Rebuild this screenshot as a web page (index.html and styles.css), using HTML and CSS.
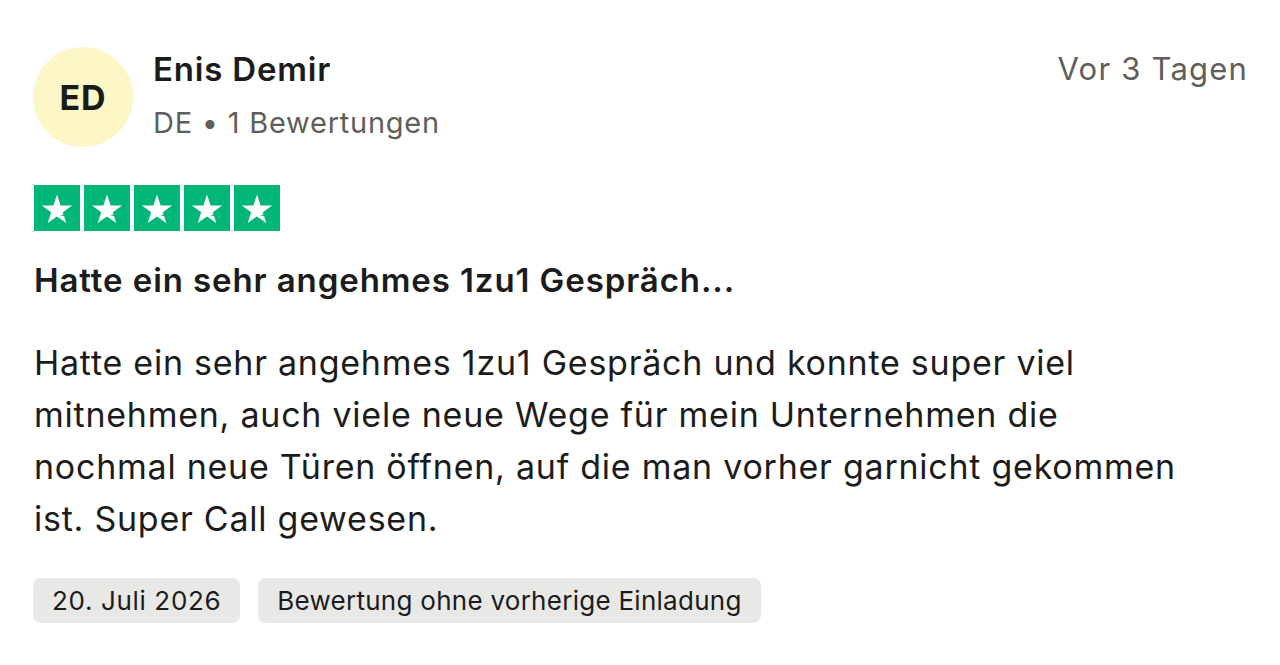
FILE: index.html
```html
<!DOCTYPE html>
<html lang="de">
<head>
<meta charset="utf-8">
<title>Bewertung</title>
<link rel="stylesheet" href="styles.css">
</head>
<body>
<article class="card">
  <header class="head">
    <div class="avatar">ED</div>
    <div class="who">
      <div class="name">Enis Demir</div>
      <div class="meta">DE • 1 Bewertungen</div>
    </div>
    <div class="when">Vor 3 Tagen</div>
  </header>
  <div class="stars">
    <span class="star"><svg viewBox="0 0 46 46"><path d="M23 9.5l3.6 10.9h11.5l-9.3 6.8 3.5 10.9-9.3-6.7-9.3 6.7 3.5-10.9-9.3-6.8h11.5z" fill="#fff"/><path d="M26.2 30.4l3.6-1.1 0.5 1.6z" fill="#00b67a"/></svg></span>
    <span class="star"><svg viewBox="0 0 46 46"><path d="M23 9.5l3.6 10.9h11.5l-9.3 6.8 3.5 10.9-9.3-6.7-9.3 6.7 3.5-10.9-9.3-6.8h11.5z" fill="#fff"/><path d="M26.2 30.4l3.6-1.1 0.5 1.6z" fill="#00b67a"/></svg></span>
    <span class="star"><svg viewBox="0 0 46 46"><path d="M23 9.5l3.6 10.9h11.5l-9.3 6.8 3.5 10.9-9.3-6.7-9.3 6.7 3.5-10.9-9.3-6.8h11.5z" fill="#fff"/><path d="M26.2 30.4l3.6-1.1 0.5 1.6z" fill="#00b67a"/></svg></span>
    <span class="star"><svg viewBox="0 0 46 46"><path d="M23 9.5l3.6 10.9h11.5l-9.3 6.8 3.5 10.9-9.3-6.7-9.3 6.7 3.5-10.9-9.3-6.8h11.5z" fill="#fff"/><path d="M26.2 30.4l3.6-1.1 0.5 1.6z" fill="#00b67a"/></svg></span>
    <span class="star"><svg viewBox="0 0 46 46"><path d="M23 9.5l3.6 10.9h11.5l-9.3 6.8 3.5 10.9-9.3-6.7-9.3 6.7 3.5-10.9-9.3-6.8h11.5z" fill="#fff"/><path d="M26.2 30.4l3.6-1.1 0.5 1.6z" fill="#00b67a"/></svg></span>
  </div>
  <h2 class="title">Hatte ein sehr angehmes 1zu1 Gespräch...</h2>
  <p class="text">Hatte ein sehr angehmes 1zu1 Gespräch und konnte super viel mitnehmen, auch viele neue Wege für mein Unternehmen die nochmal neue Türen öffnen, auf die man vorher garnicht gekommen ist. Super Call gewesen.</p>
  <div class="tags">
    <span class="tag tag-date">20. Juli 2026</span>
    <span class="tag">Bewertung ohne vorherige Einladung</span>
  </div>
</article>
</body>
</html>
```
FILE: styles.css
```css
* { box-sizing: border-box; }
html, body { margin: 0; padding: 0; background: #fff; }
body {
  font-family: Inter, "Noto Sans", "Liberation Sans", sans-serif;
  color: #1c1c1c;
  width: 1280px;
  height: 665px;
  overflow: hidden;
}
.card { padding: 47px 34px 0 34px; }
.head { display: flex; align-items: flex-start; }
.avatar {
  width: 100px; height: 100px; border-radius: 50%;
  background: #fdf6c6;
  display: flex; align-items: center; justify-content: center;
  font-weight: 700; font-size: 34px; color: #1a1a1a; letter-spacing: 0.8px;
  margin-left: -1px; flex: none;
}
.who { margin-left: 20px; flex: 1; padding-top: 0; }
.name { font-size: 33px; font-weight: 600; line-height: 44px; letter-spacing: 0.8px; }
.meta { font-size: 29px; color: #5f5e5a; line-height: 44px; margin-top: 10px; letter-spacing: 0.75px; }
.when { font-size: 31px; color: #5f5e5a; line-height: 44px; padding-top: 0; letter-spacing: 1.2px; margin-right: -2px; }
.stars { display: flex; gap: 4px; margin-top: 38px; }
.star { width: 46px; height: 46px; background: #00b67a; display: block; flex: none; }
.star svg { width: 46px; height: 46px; display: block; }
.title { margin: 27px 0 0 0; font-size: 33px; font-weight: 600; line-height: 44px; letter-spacing: 0.9px; }
.text { margin: 35px 0 0 0; font-size: 34px; line-height: 52px; letter-spacing: 0.75px; max-width: 1155px; }
.tags { display: flex; gap: 18px; margin-top: 33px; margin-left: -1px; }
.tag {
  background: #e8e8e6; border-radius: 8px; height: 45px;
  padding: 0 19px 0 19px; display: flex; align-items: center;
  font-size: 26px; color: #1c1c1c; letter-spacing: 0.27px;
}
.tag-date { letter-spacing: 0.65px; }
```
